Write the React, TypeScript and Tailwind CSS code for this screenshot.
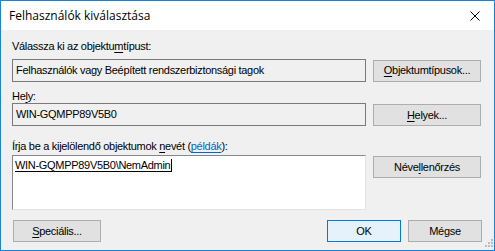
import React from "react";

const ui = "font-['Liberation_Sans',Arial,sans-serif] text-[11px] leading-[13px] tracking-[-0.3px] text-black";

function Btn({ children, primary = false, className = "" }: { children: React.ReactNode; primary?: boolean; className?: string }) {
  return (
    <div
      className={
        "flex h-[22px] items-center justify-center border " +
        (primary ? "border-[#0078d7] bg-[#e5f1fb] " : "border-[#adadad] bg-[#e1e1e1] ") +
        className
      }
    >
      {children}
    </div>
  );
}

function U({ children }: { children: React.ReactNode }) {
  return <span className="underline underline-offset-[2px]">{children}</span>;
}

function ReadOnlyBox({ children }: { children: React.ReactNode }) {
  return (
    <div className="flex h-[23px] w-[354px] items-center border border-[#7a7a7a] bg-[#f0f0f0] pl-[3px]">
      {children}
    </div>
  );
}

export default function App() {
  return (
    <div className={"relative h-[251px] w-[495px] overflow-hidden border border-[#1883d7] bg-[#f0f0f0] " + ui}>
      {/* title bar */}
      <div className="flex h-[29px] items-center justify-between bg-white pl-[8px] pr-[13px]">
        <span className="font-['Open_Sans',sans-serif] text-[12px] tracking-normal text-black">Felhasználók kiválasztása</span>
        <svg width="10" height="10" viewBox="0 0 10 10" className="mr-[1px]">
          <path d="M0.5 0.5 L9.5 9.5 M9.5 0.5 L0.5 9.5" stroke="#000" strokeWidth="1" />
        </svg>
      </div>

      <div className="flex flex-col pl-[11px] pr-[12px] pt-[10px]">
        {/* row 1 */}
        <div>
          Válassza ki az objektu<U>m</U>típust:
        </div>
        <div className="mt-[6px] flex items-center gap-[7px]">
          <ReadOnlyBox>Felhasználók vagy Beépített rendszerbiztonsági tagok</ReadOnlyBox>
          <Btn className="w-[108px]">
            <U>O</U>bjektumtípusok...
          </Btn>
        </div>

        {/* row 2 */}
        <div className="mt-[8px]">
          He<U>l</U>y:
        </div>
        <div className="flex items-center gap-[7px]">
          <ReadOnlyBox>WIN-GQMPP89V5B0</ReadOnlyBox>
          <Btn className="mt-[1px] w-[108px]">
            <U>H</U>elyek...
          </Btn>
        </div>

        {/* row 3 */}
        <div className="mt-[14px]">
          Írja be a kijelölendő objektumok <U>n</U>evét (<span className="text-[#0066cc] underline underline-offset-[2px]">példák</span>):
        </div>
        <div className="mt-[2px] flex items-start gap-[7px]">
          <div className="h-[55px] w-[354px] border border-t-[#828790] border-l-[#828790] border-r-[#e3e3e3] border-b-[#e3e3e3] bg-white pl-[2px] pt-[3px]">
            <span className="border-b border-r border-black pr-[1px]">WIN-GQMPP89V5B0\NemAdmin</span>
          </div>
          <Btn className="mt-[1px] w-[108px]">
            Néve<U>l</U>lenőrzés
          </Btn>
        </div>

        {/* bottom buttons */}
        <div className="mt-[10px] flex items-center justify-between">
          <Btn className="ml-[1px] w-[88px]">
            <U>S</U>peciális...
          </Btn>
          <div className="flex gap-[7px]">
            <Btn primary className="w-[74px]">
              OK
            </Btn>
            <Btn className="w-[74px]">Mégse</Btn>
          </div>
        </div>
      </div>

      {/* resize grip */}
      <svg width="10" height="10" viewBox="0 0 10 10" className="absolute left-[482px] top-[238px]">
        {[
          [8, 0],
          [8, 3],
          [5, 3],
          [8, 6],
          [5, 6],
          [2, 6],
        ].map(([x, y], i) => (
          <rect key={i} x={x} y={y} width="2" height="2" fill="#bdbdbd" />
        ))}
      </svg>
    </div>
  );
}
